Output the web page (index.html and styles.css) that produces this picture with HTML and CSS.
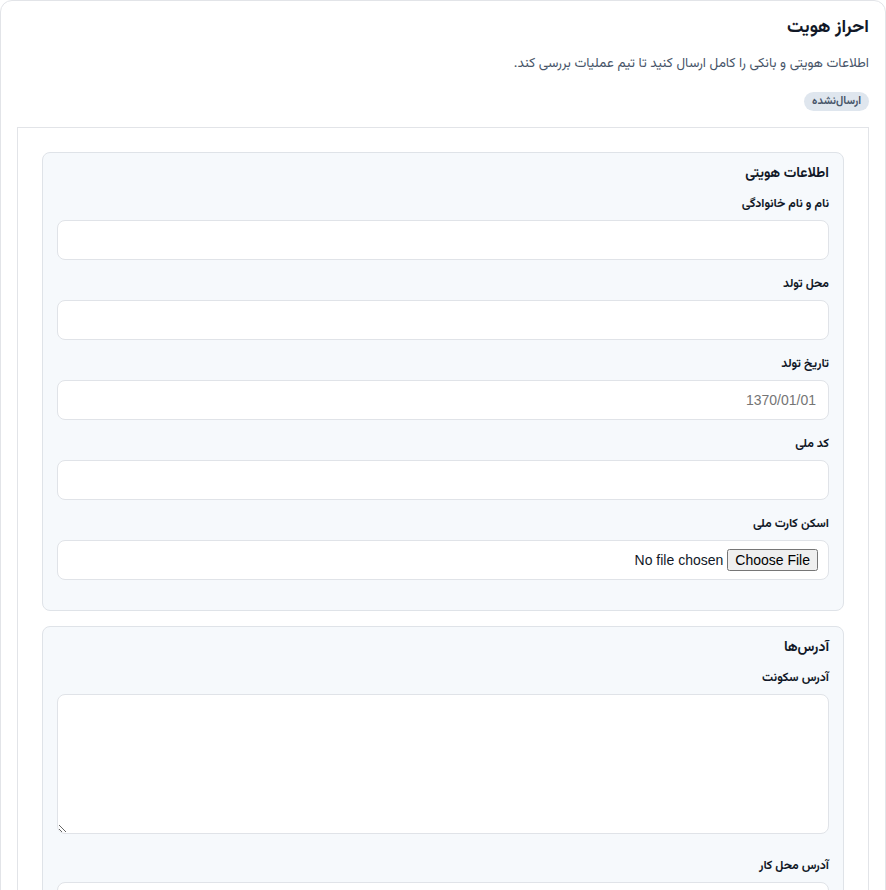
FILE: index.html
```html
<!DOCTYPE html>
<html lang="fa" dir="rtl">
<head>
<meta charset="utf-8">
<title>احراز هویت</title>
<link rel="stylesheet" href="styles.css">
</head>
<body>
<div class="card">
  <h1 class="title">احراز هویت</h1>
  <p class="subtitle">اطلاعات هویتی و بانکی را کامل ارسال کنید تا تیم عملیات بررسی کند.</p>
  <div class="badge-row"><span class="badge">ارسال‌نشده</span></div>
  <div class="panel">
    <section class="section">
      <h2 class="section-title">اطلاعات هویتی</h2>
      <div class="field">
        <label class="label">نام و نام خانوادگی</label>
        <input class="input" type="text">
      </div>
      <div class="field">
        <label class="label">محل تولد</label>
        <input class="input" type="text">
      </div>
      <div class="field">
        <label class="label">تاریخ تولد</label>
        <input class="input" type="text" placeholder="1370/01/01">
      </div>
      <div class="field">
        <label class="label">کد ملی</label>
        <input class="input" type="text">
      </div>
      <div class="field">
        <label class="label">اسکن کارت ملی</label>
        <input class="input file" type="file">
      </div>
    </section>
    <section class="section">
      <h2 class="section-title">آدرس‌ها</h2>
      <div class="field">
        <label class="label">آدرس سکونت</label>
        <textarea class="input textarea"></textarea>
      </div>
      <div class="field">
        <label class="label">آدرس محل کار</label>
        <input class="input" type="text">
      </div>
    </section>
  </div>
</div>
</body>
</html>
```
FILE: styles.css
```css
* { box-sizing: border-box; }
html, body { margin: 0; padding: 0; background: #ffffff; }
body {
  font-family: "Vazirmatn", "Noto Sans Arabic", "Noto Naskh Arabic", "Noto Sans", "DejaVu Sans", sans-serif;
  color: #111827;
  direction: rtl;
}
.card {
  border: 1px solid #e2e4e8;
  border-radius: 12px;
  padding: 15px 16px 16px;
  background: #fff;
  min-height: 900px;
}
.title {
  margin: 0;
  font-size: 18px;
  line-height: 24px;
  font-weight: 700;
  color: #111827;
}
.subtitle {
  margin: 12px 0 0;
  font-size: 13.5px;
  line-height: 24px;
  color: #475569;
}
.badge-row { margin-top: 16px; display: flex; }
.badge {
  display: inline-block;
  background: #dfe6ee;
  color: #475569;
  font-size: 11px;
  line-height: 15px;
  font-weight: 700;
  padding: 2px 8px;
  border-radius: 999px;
}
.panel {
  margin-top: 16px;
  border: 1px solid #e2e4e8;
  padding: 24px;
  background: #fff;
  display: flex;
  flex-direction: column;
  gap: 15px;
}
.section {
  background: #f6f9fc;
  border: 1px solid #dfe3e8;
  border-radius: 8px;
  padding: 11px 14px 14px;
}
.section-title {
  margin: 0 0 12px;
  font-size: 14px;
  line-height: 20px;
  font-weight: 700;
}
.field { margin-bottom: 16px; }
.label {
  display: block;
  font-size: 12.2px;
  line-height: 16px;
  font-weight: 700;
  margin-bottom: 8px;
  color: #111827;
}
.input {
  display: block;
  width: 100%;
  height: 40px;
  border: 1px solid #e0e3e8;
  border-radius: 8px;
  background: #fff;
  padding: 0 12px;
  font-family: "Liberation Sans", Arial, sans-serif;
  font-size: 14px;
  color: #111827;
  direction: rtl;
}
.input::placeholder { color: #757575; }
.file { padding: 8px 10px; font-size: 14px; }
.textarea {
  height: 140px;
  resize: vertical;
  padding: 8px 12px;
  margin-bottom: 24px;
}
```
